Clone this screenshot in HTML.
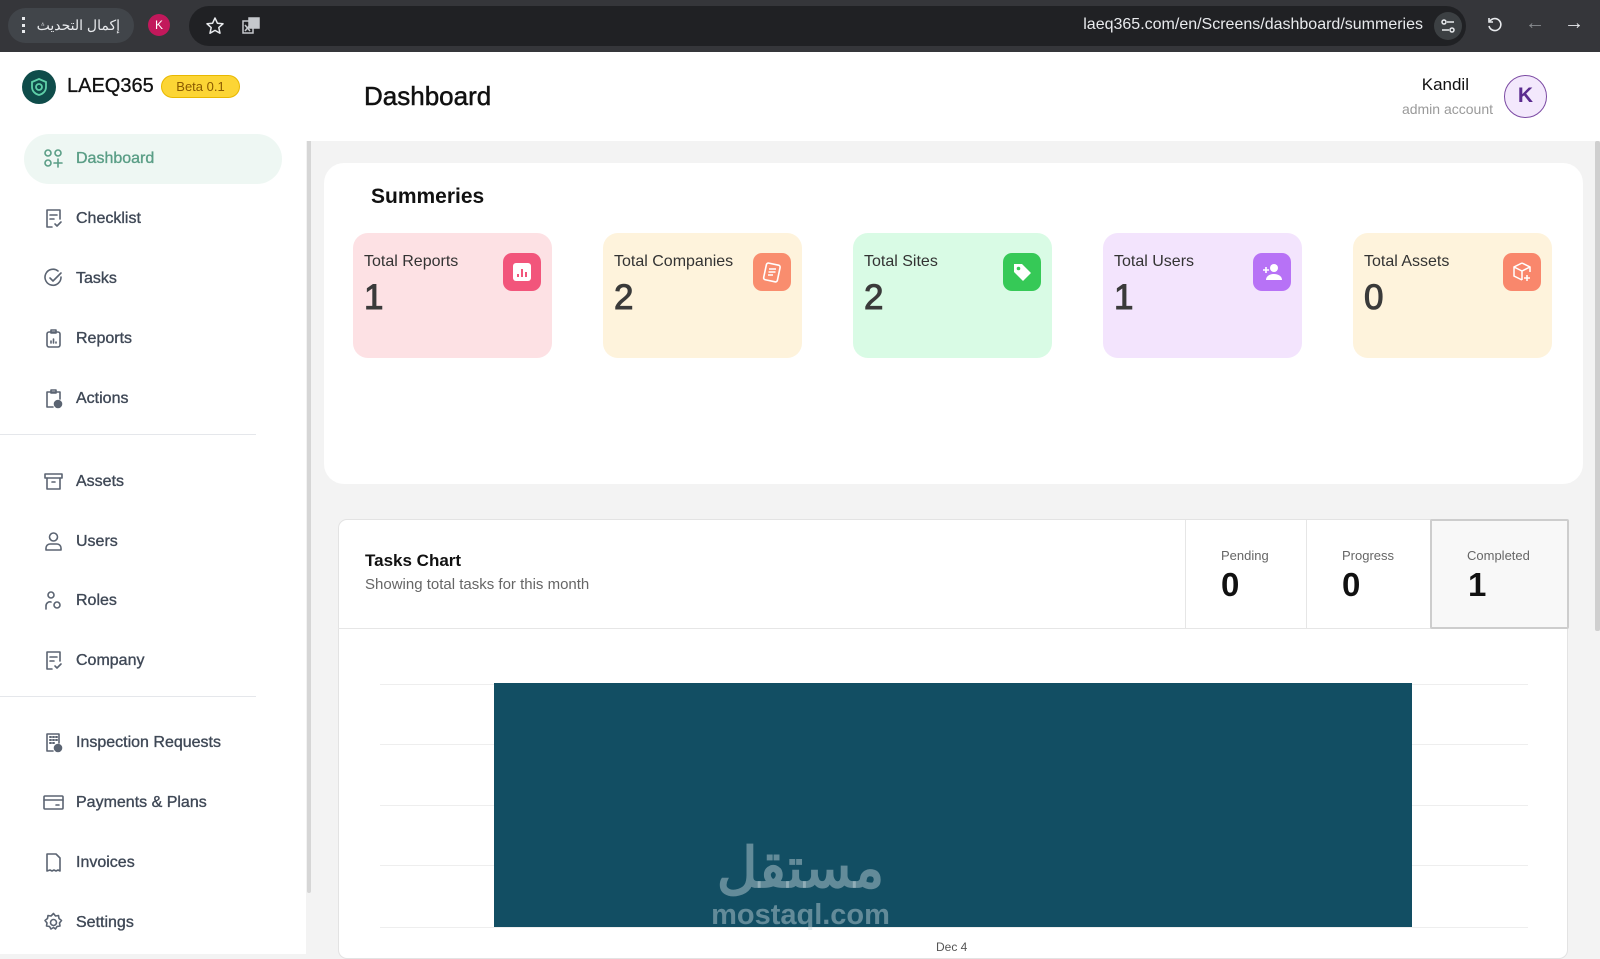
<!DOCTYPE html>
<html><head><meta charset="utf-8"><style>
*{box-sizing:border-box;margin:0;padding:0}
body{width:1600px;height:954px;overflow:hidden;background:#f3f3f3;font-family:"Liberation Sans","Noto Sans CJK SC",sans-serif;position:relative}
.abs{position:absolute}
.bar{left:0;top:0;width:1600px;height:52px;background:#35363a}
.nav{position:absolute;left:43px;display:flex;align-items:center;gap:12px;font-size:16px;color:#3f4856;font-weight:normal;-webkit-text-stroke:0.35px #3f4856}
.nav svg{width:21px;height:21px;fill:none;stroke:#5b6472;stroke-width:1.6;stroke-linecap:round;stroke-linejoin:round}
.card{position:absolute;top:233px;width:199px;height:125px;border-radius:15px}
.card .l{position:absolute;left:11px;top:20px;font-size:16px;color:#333}
.card .n{position:absolute;left:11px;top:45px;font-size:35px;color:#3a3a3a;font-weight:normal;-webkit-text-stroke:1px #3a3a3a}
.card .i{position:absolute;left:150px;top:20px;width:38px;height:38px;border-radius:9px;display:flex;align-items:center;justify-content:center}
.st{position:absolute;top:548px;font-size:13px;color:#666}
.sn{position:absolute;top:566px;font-size:33px;font-weight:700;color:#111}
.g{position:absolute;left:380px;width:1148px;height:1px;background:#eee}
</style></head><body>
<div class="abs bar"></div>
<div class="abs" style="left:8px;top:8px;width:126px;height:35px;border-radius:18px;background:#41454a;color:#e8eaed;font-size:14px;line-height:35px;text-align:right;padding-right:14px">إكمال التحديث</div>
<div class="abs" style="left:22px;top:17px;width:3px;height:16px;border-left:3px dotted #e8eaed"></div>
<div class="abs" style="left:148px;top:14px;width:22px;height:22px;border-radius:50%;background:#c2185b;color:#fff;font-size:12px;text-align:center;line-height:22px">K</div>
<div class="abs" style="left:189px;top:6px;width:1277px;height:40px;border-radius:20px;background:#202124"></div>
<svg class="abs" style="left:205px;top:16px" width="20" height="20" viewBox="0 0 20 20" fill="none" stroke="#e8eaed" stroke-width="1.5" stroke-linejoin="round"><path d="M10 2l2.4 5.2 5.6.6-4.2 3.8 1.2 5.6L10 14.4l-5 2.8 1.2-5.6L2 7.8l5.6-.6z"/></svg>
<svg class="abs" style="left:241px;top:16px" width="20" height="20" viewBox="0 0 20 20" fill="none" stroke="#c5c8cc" stroke-width="1.5"><rect x="2" y="5" width="10" height="12"/><rect x="8" y="2" width="10" height="10" fill="#c5c8cc"/><path d="M4 9l5 6M9 9l-5 6"/></svg>
<div class="abs" style="right:177px;top:16px;color:#e8eaed;font-size:16px">laeq365.com/en/Screens/dashboard/summeries</div>
<div class="abs" style="left:1434px;top:12px;width:28px;height:28px;border-radius:50%;background:#3c4043"></div>
<svg class="abs" style="left:1440px;top:18px" width="16" height="16" viewBox="0 0 16 16" fill="none" stroke="#e8eaed" stroke-width="1.5"><circle cx="4" cy="4" r="2"/><path d="M7 4h7M2 12h7"/><circle cx="12" cy="12" r="2"/></svg>
<svg class="abs" style="left:1486px;top:16px" width="18" height="18" viewBox="0 0 18 18" fill="none" stroke="#e8eaed" stroke-width="1.6"><path d="M4 5a6 6 0 1 1-1 5"/><path d="M3 2v4h4"/></svg>
<div class="abs" style="left:1525px;top:12px;color:#8a8d91;font-size:20px">←</div>
<div class="abs" style="left:1564px;top:12px;color:#e8eaed;font-size:20px">→</div>

<div class="abs" style="left:0;top:52px;width:306px;height:902px;background:#fff"></div>
<div class="abs" style="left:307px;top:120px;width:4px;height:773px;background:#d6d6d6;border-radius:2px"></div>
<div class="abs" style="left:306px;top:52px;width:1294px;height:89px;background:#fff"></div>
<div class="abs" style="left:1595px;top:141px;width:5px;height:490px;background:#cfcfcf;border-radius:2px"></div>

<div class="abs" style="left:22px;top:70px;width:34px;height:34px;border-radius:50%;background:#0f4c4a"></div>
<svg class="abs" style="left:29px;top:77px" width="20" height="20" viewBox="0 0 20 20" fill="none" stroke="#5fd0a8" stroke-width="1.8"><path d="M10 2l7 3v5c0 4-3 7-7 8-4-1-7-4-7-8V5z"/><circle cx="10" cy="10" r="3"/></svg>
<div class="abs" style="left:67px;top:75px;font-size:20px;color:#111;-webkit-text-stroke:0.3px #111">LAEQ365</div>
<div class="abs" style="left:161px;top:75px;width:79px;height:23px;border-radius:12px;background:#fcd535;border:1px solid #e8b800;color:#8a5a00;font-size:13px;text-align:center;line-height:21px">Beta 0.1</div>

<div class="abs" style="left:24px;top:134px;width:258px;height:50px;border-radius:25px;background:#eef7f3"></div>
<div class="nav" style="top:148px;color:#5a9e86;-webkit-text-stroke:0.35px #5a9e86"><svg viewBox="0 0 21 21" style="stroke:#5a9e86"><circle cx="5" cy="5" r="3"/><circle cx="15" cy="5" r="3"/><circle cx="5" cy="15" r="3"/><path d="M15 11v8M11 15h8"/></svg>Dashboard</div>
<div class="nav" style="top:208px"><svg viewBox="0 0 21 21"><path d="M9 19H4V2h13v9M7 7h7M7 11h4M12 16l2 2 4-4"/></svg>Checklist</div>
<div class="nav" style="top:268px"><svg viewBox="0 0 21 21"><path d="M18 9a8 8 0 1 1-3-6"/><path d="M7 10l3 3 8-8"/></svg>Tasks</div>
<div class="nav" style="top:328px"><svg viewBox="0 0 21 21"><rect x="4" y="4" width="13" height="15" rx="2"/><rect x="8" y="2" width="5" height="3"/><path d="M8 15v-2M10.5 15v-4M13 15v-1"/></svg>Reports</div>
<div class="nav" style="top:388px"><svg viewBox="0 0 21 21"><path d="M10 19H4V4h13v7M8 2h5v3H8z"/><circle cx="15" cy="16" r="3.5" fill="#5b6472"/></svg>Actions</div>
<div class="abs" style="left:0;top:434px;width:256px;height:1px;background:#e5e7eb"></div>
<div class="nav" style="top:471px"><svg viewBox="0 0 21 21"><rect x="2" y="3" width="17" height="4"/><path d="M4 7v11h13V7M9 11h3"/></svg>Assets</div>
<div class="nav" style="top:531px"><svg viewBox="0 0 21 21"><circle cx="10.5" cy="6" r="4"/><path d="M3 19v-2a4 4 0 0 1 4-4h7a4 4 0 0 1 4 4v2z"/></svg>Users</div>
<div class="nav" style="top:590px"><svg viewBox="0 0 21 21"><circle cx="8" cy="5" r="3"/><path d="M3 19v-3a4 4 0 0 1 5-4"/><circle cx="14" cy="15" r="3"/></svg>Roles</div>
<div class="nav" style="top:650px"><svg viewBox="0 0 21 21"><path d="M9 19H4V2h13v9M7 7h7M7 11h4M12 16l2 2 4-4"/></svg>Company</div>
<div class="abs" style="left:0;top:696px;width:256px;height:1px;background:#e5e7eb"></div>
<div class="nav" style="top:732px"><svg viewBox="0 0 21 21"><path d="M10 19H4V2h12v9"/><path d="M7 5h1M10 5h1M13 5h1M7 8h1M10 8h1M13 8h1M7 11h1M10 11h1" stroke-width="2"/><circle cx="15" cy="16" r="3.5" fill="#5b6472"/></svg>Inspection Requests</div>
<div class="nav" style="top:792px"><svg viewBox="0 0 21 21"><rect x="1" y="4" width="19" height="13" rx="1"/><path d="M1 8h19M13 13h3"/></svg>Payments &amp; Plans</div>
<div class="nav" style="top:852px"><svg viewBox="0 0 21 21"><path d="M4 2h9l4 4v13l-2-1-2 1-2-1-2 1-2-1-3 1z"/></svg>Invoices</div>
<div class="nav" style="top:912px"><svg viewBox="0 0 21 21"><circle cx="10.5" cy="10.5" r="3"/><path d="M10.5 1.5l2 2.5 3-.5.5 3 2.5 2-2 2.5.5 3-3 .5-1.5 2.5-2-1.5-2.5 1.5-1.5-2.5-3-.5.5-3-2-2.5 2.5-2 .5-3 3 .5z"/></svg>Settings</div>

<div class="abs" style="left:364px;top:81px;font-size:26px;color:#111;-webkit-text-stroke:0.5px #111">Dashboard</div>
<div class="abs" style="right:131px;top:75px;font-size:17px;color:#111">Kandil</div>
<div class="abs" style="right:107px;top:101px;font-size:14px;color:#9a9a9a">admin account</div>
<div class="abs" style="left:1504px;top:75px;width:43px;height:43px;border-radius:50%;background:#f3e8fc;border:1.5px solid #7b4aa3;color:#5b2b8f;font-size:21px;font-weight:700;text-align:center;line-height:40px">K</div>

<div class="abs" style="left:324px;top:163px;width:1259px;height:321px;border-radius:20px;background:#fff"></div>
<div class="abs" style="left:371px;top:185px;font-size:21px;font-weight:700;color:#111">Summeries</div>

<div class="card" style="left:353px;background:#fde1e4"><div class="l">Total Reports</div><div class="n">1</div><div class="i" style="background:#f2557b"><svg width="20" height="20" viewBox="0 0 20 20"><rect x="1" y="1" width="18" height="18" rx="3" fill="#fff"/><path d="M6 15v-3M10 15V7M14 15v-5" stroke="#f2557b" stroke-width="2"/></svg></div></div>
<div class="card" style="left:603px;background:#fef3dc"><div class="l">Total Companies</div><div class="n">2</div><div class="i" style="background:#f98d6e"><svg width="22" height="22" viewBox="0 0 22 22" fill="none" stroke="#fff" stroke-width="1.6"><rect x="4" y="3" width="14" height="17" rx="2" transform="rotate(12 11 11)"/><path d="M8 8h7M7.5 11h7M7 14h5"/></svg></div></div>
<div class="card" style="left:853px;background:#d9fbe5"><div class="l">Total Sites</div><div class="n">2</div><div class="i" style="background:#36c957"><svg width="22" height="22" viewBox="0 0 22 22"><path d="M3 3h8l9 9-8 8-9-9z" fill="#fff"/><circle cx="7.5" cy="7.5" r="1.8" fill="#36c957"/></svg></div></div>
<div class="card" style="left:1103px;background:#f3e4fd"><div class="l">Total Users</div><div class="n">1</div><div class="i" style="background:#b772f6"><svg width="24" height="22" viewBox="0 0 24 22"><circle cx="14" cy="7" r="4" fill="#fff"/><path d="M6 19c0-4 4-6 8-6s8 2 8 6z" fill="#fff"/><path d="M3 9h6M6 6v6" stroke="#fff" stroke-width="1.6"/></svg></div></div>
<div class="card" style="left:1353px;background:#fef3dc"><div class="l">Total Assets</div><div class="n">0</div><div class="i" style="background:#f9876c"><svg width="22" height="22" viewBox="0 0 22 22" fill="none" stroke="#fff" stroke-width="1.5"><path d="M11 2l8 4v5M11 2L3 6v9l8 4M3 6l8 4 8-4M11 10v9"/><path d="M16 14v6M13 17h6"/></svg></div></div>

<div class="abs" style="left:338px;top:519px;width:1230px;height:440px;border-radius:9px;background:#fff;border:1px solid #e3e3e3"></div>
<div class="abs" style="left:338px;top:628px;width:1230px;height:1px;background:#e6e6e6"></div>
<div class="abs" style="left:365px;top:551px;font-size:17px;font-weight:700;color:#111">Tasks Chart</div>
<div class="abs" style="left:365px;top:576px;font-size:15px;color:#666">Showing total tasks for this month</div>
<div class="abs" style="left:1185px;top:520px;width:1px;height:108px;background:#e6e6e6"></div>
<div class="abs" style="left:1306px;top:520px;width:1px;height:108px;background:#e6e6e6"></div>
<div class="abs" style="left:1430px;top:519px;width:139px;height:110px;background:#f8f8f8;border:2px solid #cdcdcd;border-radius:2px"></div>
<div class="st" style="left:1221px">Pending</div><div class="sn" style="left:1221px">0</div>
<div class="st" style="left:1342px">Progress</div><div class="sn" style="left:1342px">0</div>
<div class="st" style="left:1467px">Completed</div><div class="sn" style="left:1468px">1</div>

<div class="g" style="top:684px"></div><div class="g" style="top:744px"></div><div class="g" style="top:805px"></div><div class="g" style="top:865px"></div><div class="g" style="top:927px"></div>
<div class="abs" style="left:494px;top:683px;width:918px;height:244px;background:#124e63"></div>
<div class="abs" style="left:703px;top:838px;width:195px;font-size:56px;font-weight:700;color:rgba(200,215,220,0.45);text-align:center;line-height:60px">مستقل</div>
<div class="abs" style="left:703px;top:900px;width:195px;font-size:29px;font-weight:700;color:rgba(200,215,220,0.45);text-align:center;line-height:30px">mostaql.com</div>
<div class="abs" style="left:936px;top:940px;font-size:12px;color:#555">Dec 4</div>
</body></html>
